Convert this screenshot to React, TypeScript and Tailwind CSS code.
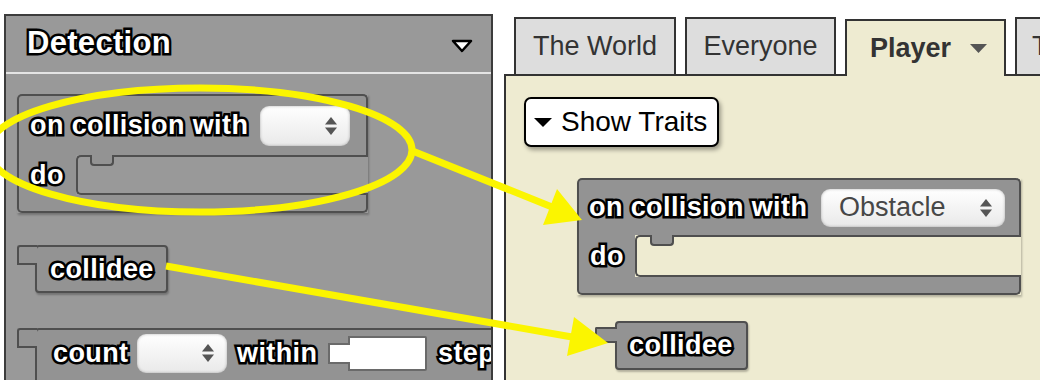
import React, { FunctionComponent, ReactNode } from 'react';

// outlined white block label (Blockly style)
const label =
  "text-white font-bold text-[27px] leading-none tracking-[0.4px] whitespace-nowrap [-webkit-text-stroke:5px_#000] [paint-order:stroke_fill]";

const blockFill = 'bg-[#939393] border-[#4f4f4f]';

const Arrows: FunctionComponent = () => (
  <svg width="12" height="18" viewBox="0 0 12 18">
    <polygon fill="#555" points="6,0 12,7.5 0,7.5" />
    <polygon fill="#555" points="0,10.5 12,10.5 6,18" />
  </svg>
);

interface DropdownProps {
  className: string;
  text?: string;
}

const Dropdown: FunctionComponent<DropdownProps> = ({ className, text }) => (
  <div
    className={`${className} flex items-center justify-between pl-[18px] pr-[13px] rounded-[9px] bg-linear-to-b from-white to-[#e9e9e9] shadow-[inset_0_0_3px_rgba(0,0,0,0.3)]`}
  >
    <span className="text-[27px] leading-none text-[#474747]">{text}</span>
    <Arrows />
  </div>
);

interface CBlockProps {
  width: string;
  topHeight: string;
  slotHeight: string;
  armWidth: string;
  notchLeft: string;
  header: ReactNode;
}

const CBlock: FunctionComponent<CBlockProps> = ({
  width,
  topHeight,
  slotHeight,
  armWidth,
  notchLeft,
  header,
}) => (
  <div className={`${width} flex flex-col shadow-[1px_2px_2px_rgba(0,0,0,0.25)]`}>
    <div
      className={`${topHeight} ${blockFill} border-2 border-b-0 rounded-t-[5px] flex items-center pl-[9px]`}
    >
      {header}
    </div>
    <div className={`${slotHeight} flex`}>
      <div className={`${armWidth} ${blockFill} border-l-2 flex items-center pl-[11px]`}>
        <span className={label}>do</span>
      </div>
      <div className="relative flex-1 border-2 border-r-0 border-[#4f4f4f] rounded-l-[5px]">
        <div
          className={`absolute top-[-2px] ${notchLeft} w-[24px] h-[11px] ${blockFill} border-2 border-t-0 rounded-b-[4px]`}
        />
      </div>
    </div>
    <div className={`h-[18px] ${blockFill} border-2 border-t-0 rounded-b-[5px]`} />
  </div>
);

const Tab: FunctionComponent<{ className: string; children: ReactNode }> = ({
  className,
  children,
}) => (
  <div
    className={`${className} shrink-0 h-[57px] border-2 border-b-0 border-[#333] bg-[#dddddd] flex items-center text-[27px] text-[#333] leading-none`}
  >
    {children}
  </div>
);

const App: FunctionComponent = () => (
  <div className="relative w-[1040px] h-[380px] overflow-hidden bg-white flex font-['Liberation_Sans',Arial,sans-serif]">
    {/* left toolbox */}
    <div className="ml-[4px] mt-[14px] w-[489px] h-[400px] shrink-0 border-2 border-[#3c3c3c] bg-[#999999] overflow-hidden flex flex-col">
      <div className="h-[56px] flex items-center justify-between pl-[21px] pr-[18px] pb-[4px]">
        <span className="text-white font-bold text-[31px] leading-none tracking-[0.3px] [-webkit-text-stroke:5px_#000] [paint-order:stroke_fill]">
          Detection
        </span>
        <svg width="22" height="14" viewBox="0 0 22 14" className="mt-[7px]">
          <polygon
            points="2,2 20,2 11,12"
            fill="#fff"
            stroke="#000"
            strokeWidth="2.5"
            strokeLinejoin="round"
          />
        </svg>
      </div>
      <div className="h-[2px] bg-[#e4e4e4]" />
      <div className="pl-[11px] pt-[20px] flex flex-col">
        <CBlock
          width="w-[351px]"
          topHeight="h-[61px]"
          slotHeight="h-[40px]"
          armWidth="w-[59px]"
          notchLeft="left-[12px]"
          header={
            <>
              <span className={`${label} w-[232px] pl-[2px]`}>on collision with</span>
              <Dropdown className="w-[90px] h-[40px]" />
            </>
          }
        />

        <div className="relative ml-[18px] mt-[32px] w-[133px] h-[48px]">
          <div className={`absolute left-[-18px] top-0 w-[20px] h-[20px] ${blockFill} border-2 border-r-0 rounded-tl-[3px]`} />
          <div className={`w-full h-full ${blockFill} border-2 rounded-[4px] flex items-center pl-[13px] shadow-[1px_2px_2px_rgba(0,0,0,0.25)]`}>
            <span className={label}>collidee</span>
          </div>
        </div>

        <div className="relative ml-[18px] mt-[35px] w-[500px] h-[70px]">
          <div className={`absolute left-[-18px] top-0 w-[20px] h-[20px] ${blockFill} border-2 border-r-0 rounded-tl-[3px]`} />
          <div className={`w-full h-full ${blockFill} border-2 rounded-[4px] pt-[3px] pl-[16px]`}>
            <div className="flex items-center h-[40px]">
              <span className={`${label} w-[84px]`}>count</span>
              <Dropdown className="w-[90px] h-[39px]" />
              <span className={`${label} ml-[10px] w-[91px]`}>within</span>
              <div className="flex items-center">
                <div className="relative z-10 -mr-[2px] w-[22px] h-[21px] bg-white border-2 border-r-0 border-[#6a6a6a]" />
                <div className="w-[79px] h-[35px] bg-white border-2 border-[#6a6a6a] rounded-r-[2px]" />
              </div>
              <span className={`${label} ml-[11px]`}>step</span>
            </div>
          </div>
        </div>
      </div>
    </div>

    {/* right editor */}
    <div className="ml-[11px] w-[536px] shrink-0 flex flex-col">
      <div className="flex items-end gap-[9px] pl-[10px] pt-[17px]">
        <Tab className="w-[162px] justify-center">The World</Tab>
        <Tab className="w-[151px] justify-center">Everyone</Tab>
        <div className="relative z-10 shrink-0 -mb-[2px] w-[161px] h-[57px] border-2 border-b-0 border-[#333] bg-[#eeebd1] flex items-center justify-center gap-[19px] pl-[6px] text-[27px] font-bold text-[#333] leading-none">
          <span>Player</span>
          <svg width="17" height="9" viewBox="0 0 17 9">
            <polygon points="0,0 17,0 8.5,9" fill="#555" />
          </svg>
        </div>
        <Tab className="w-[120px] pl-[15px]">The</Tab>
      </div>
      <div className="flex-1 border-t-2 border-l-2 border-[#333] bg-[#eeebd1] pl-[18px] pt-[21px] flex flex-col">
        <div className="w-[195px] h-[50px] bg-white border-2 border-black rounded-[7px] shadow-[2px_3px_4px_rgba(0,0,0,0.35)] flex items-center pl-[7px]">
          <svg width="20" height="10" viewBox="0 0 20 10" className="mt-[2px]">
            <polygon points="1,0 19,0 10,9" fill="#000" />
          </svg>
          <span className="ml-[8px] text-[28px] leading-none text-black">Show Traits</span>
        </div>

        <div className="ml-[53px] mt-[31px]">
          <CBlock
            width="w-[444px]"
            topHeight="h-[57px]"
            slotHeight="h-[42px]"
            armWidth="w-[58px]"
            notchLeft="left-[13px]"
            header={
              <>
                <span className={`${label} w-[233px] pl-[1px]`}>on collision with</span>
                <Dropdown className="w-[184px] h-[38px]" text="Obstacle" />
              </>
            }
          />
        </div>

        <div className="relative ml-[91px] mt-[26px] w-[133px] h-[49px]">
          <div className={`absolute left-[-20px] top-[6px] w-[22px] h-[16px] ${blockFill} border-2 border-r-0 rounded-l-[2px]`} />
          <div className={`w-full h-full ${blockFill} border-2 rounded-[4px] flex items-center pl-[12px] shadow-[1px_2px_2px_rgba(0,0,0,0.25)]`}>
            <span className={label}>collidee</span>
          </div>
        </div>
      </div>
    </div>

    {/* yellow annotations */}
    <svg
      className="absolute inset-0 pointer-events-none"
      width="1040"
      height="380"
      viewBox="0 0 1040 380"
    >
      <ellipse cx="200" cy="150" rx="212" ry="62" fill="none" stroke="#fbf500" strokeWidth="7" />
      <line x1="410" y1="150" x2="552" y2="207" stroke="#fbf500" strokeWidth="7" />
      <polygon points="582,220 557,189 543,225" fill="#fbf500" />
      <line x1="166" y1="266" x2="572" y2="337" stroke="#fbf500" strokeWidth="7" />
      <polygon points="608,343 574,317 567,356" fill="#fbf500" />
    </svg>
  </div>
);

export default App;
